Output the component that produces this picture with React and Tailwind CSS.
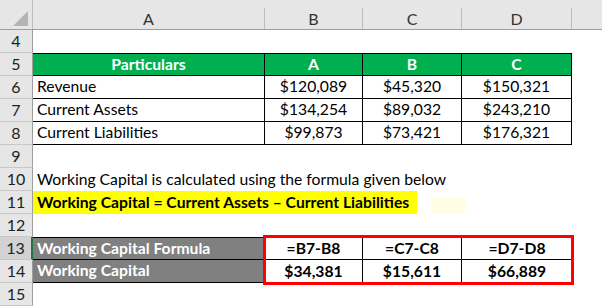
import React from "react"

const font = "font-['Lato','Liberation_Sans',sans-serif]"

const ColHead = ({ label, width }) => (
  <div className={`${width} shrink-0 pt-[8px] flex`}>
    <div className="flex-1 border-r border-[#bdbdbd] flex items-center justify-center text-[16px] text-[#333]">
      {label}
    </div>
  </div>
)

const RowHead = ({ n, active }) => (
  <div
    className={`w-[33px] h-[23px] shrink-0 flex items-center justify-center text-[16px] text-[#222] border-b border-[#c8c8c8] ${
      active ? "bg-[#d2d2d2] border-r-2 border-r-[#217346]" : "bg-[#e6e6e6] border-r border-r-[#9e9e9e]"
    }`}
  >
    {n}
  </div>
)

const Row = ({ n, active, children }) => (
  <div className="flex h-[23px]">
    <RowHead n={n} active={active} />
    {children}
  </div>
)

const Cell = ({ width, className = "", children }) => (
  <div className={`${width} shrink-0 h-full flex items-center text-[15.7px] ${className}`}>{children}</div>
)

const data = [
  ["Revenue", "$120,089", "$45,320", "$150,321"],
  ["Current Assets", "$134,254", "$89,032", "$243,210"],
  ["Current Liabilities", "$99,873", "$73,421", "$176,321"],
]

export default function App() {
  return (
    <div className={`w-[602px] h-[308px] overflow-hidden bg-white text-black ${font}`}>
      {/* column headers */}
      <div className="flex h-[30px] bg-[#e6e6e6] border-b border-[#9e9e9e]">
        <div className="w-[33px] shrink-0 border-r border-[#bdbdbd] flex items-end justify-end pr-[3px] pb-[2px]">
          <svg width="16" height="16" viewBox="0 0 16 16">
            <polygon points="0,15 15,15 15,0" fill="#b4b4b4" />
          </svg>
        </div>
        <ColHead label="A" width="w-[232px]" />
        <ColHead label="B" width="w-[98px]" />
        <ColHead label="C" width="w-[99px]" />
        <ColHead label="D" width="w-[110px]" />
        <div className="flex-1" />
      </div>

      <Row n={4} />

      <Row n={5}>
        <Cell width="w-[232px]" className="justify-center bg-[#00b050] text-white font-bold border-t border-b border-r border-black">
          Particulars
        </Cell>
        <Cell width="w-[98px]" className="justify-center bg-[#00b050] text-white font-bold border-t border-b border-r border-black">
          A
        </Cell>
        <Cell width="w-[99px]" className="justify-center bg-[#00b050] text-white font-bold border-t border-b border-r border-black">
          B
        </Cell>
        <Cell width="w-[110px]" className="justify-center bg-[#00b050] text-white font-bold border-t border-b border-r border-black">
          C
        </Cell>
      </Row>

      {data.map((r, i) => (
        <Row key={r[0]} n={6 + i}>
          <Cell width="w-[232px]" className="pl-[4px] border-b border-r border-black">{r[0]}</Cell>
          <Cell width="w-[98px]" className="justify-center border-b border-r border-black">{r[1]}</Cell>
          <Cell width="w-[99px]" className="justify-center border-b border-r border-black">{r[2]}</Cell>
          <Cell width="w-[110px]" className="justify-center border-b border-r border-black">{r[3]}</Cell>
        </Row>
      ))}

      <Row n={9} />

      <Row n={10}>
        <Cell width="w-[500px]" className="pl-[4px] whitespace-nowrap">
          Working Capital is calculated using the formula given below
        </Cell>
      </Row>

      <Row n={11}>
        <Cell width="w-[384px]" className="pl-[4px] bg-[#ffff00] font-bold whitespace-nowrap">
          Working Capital = Current Assets – Current Liabilities
        </Cell>
        <div className="ml-[15px] w-[33px] h-[16px] self-end bg-[#fffde2]" />
      </Row>

      <Row n={12} />

      <div className="flex">
        <div className="flex flex-col">
          <RowHead n={13} active />
          <RowHead n={14} />
        </div>
        <div className="w-[232px] shrink-0 flex flex-col">
          <div className="h-[23px] flex items-center pl-[4px] bg-[#808080] text-white font-bold text-[15.7px] border-t border-b border-r border-black">
            Working Capital Formula
          </div>
          <div className="h-[23px] flex items-center pl-[4px] bg-[#808080] text-white font-bold text-[15.7px] border-b border-r border-black">
            Working Capital
          </div>
        </div>
        <div className="relative z-10 w-[307px] shrink-0 grid grid-cols-[98px_99px_110px] grid-rows-[23px_23px] font-bold text-[15.7px] outline-[3px] outline-[#ff0000] outline-offset-[-1px]">
          <div className="flex items-center justify-center border-t border-b border-r border-black">=B7-B8</div>
          <div className="flex items-center justify-center border-t border-b border-r border-black">=C7-C8</div>
          <div className="flex items-center justify-center border-t border-b border-black">=D7-D8</div>
          <div className="flex items-center justify-center border-r border-black">$34,381</div>
          <div className="flex items-center justify-center border-r border-black">$15,611</div>
          <div className="flex items-center justify-center">$66,889</div>
        </div>
      </div>

      <Row n={15} />
    </div>
  )
}
